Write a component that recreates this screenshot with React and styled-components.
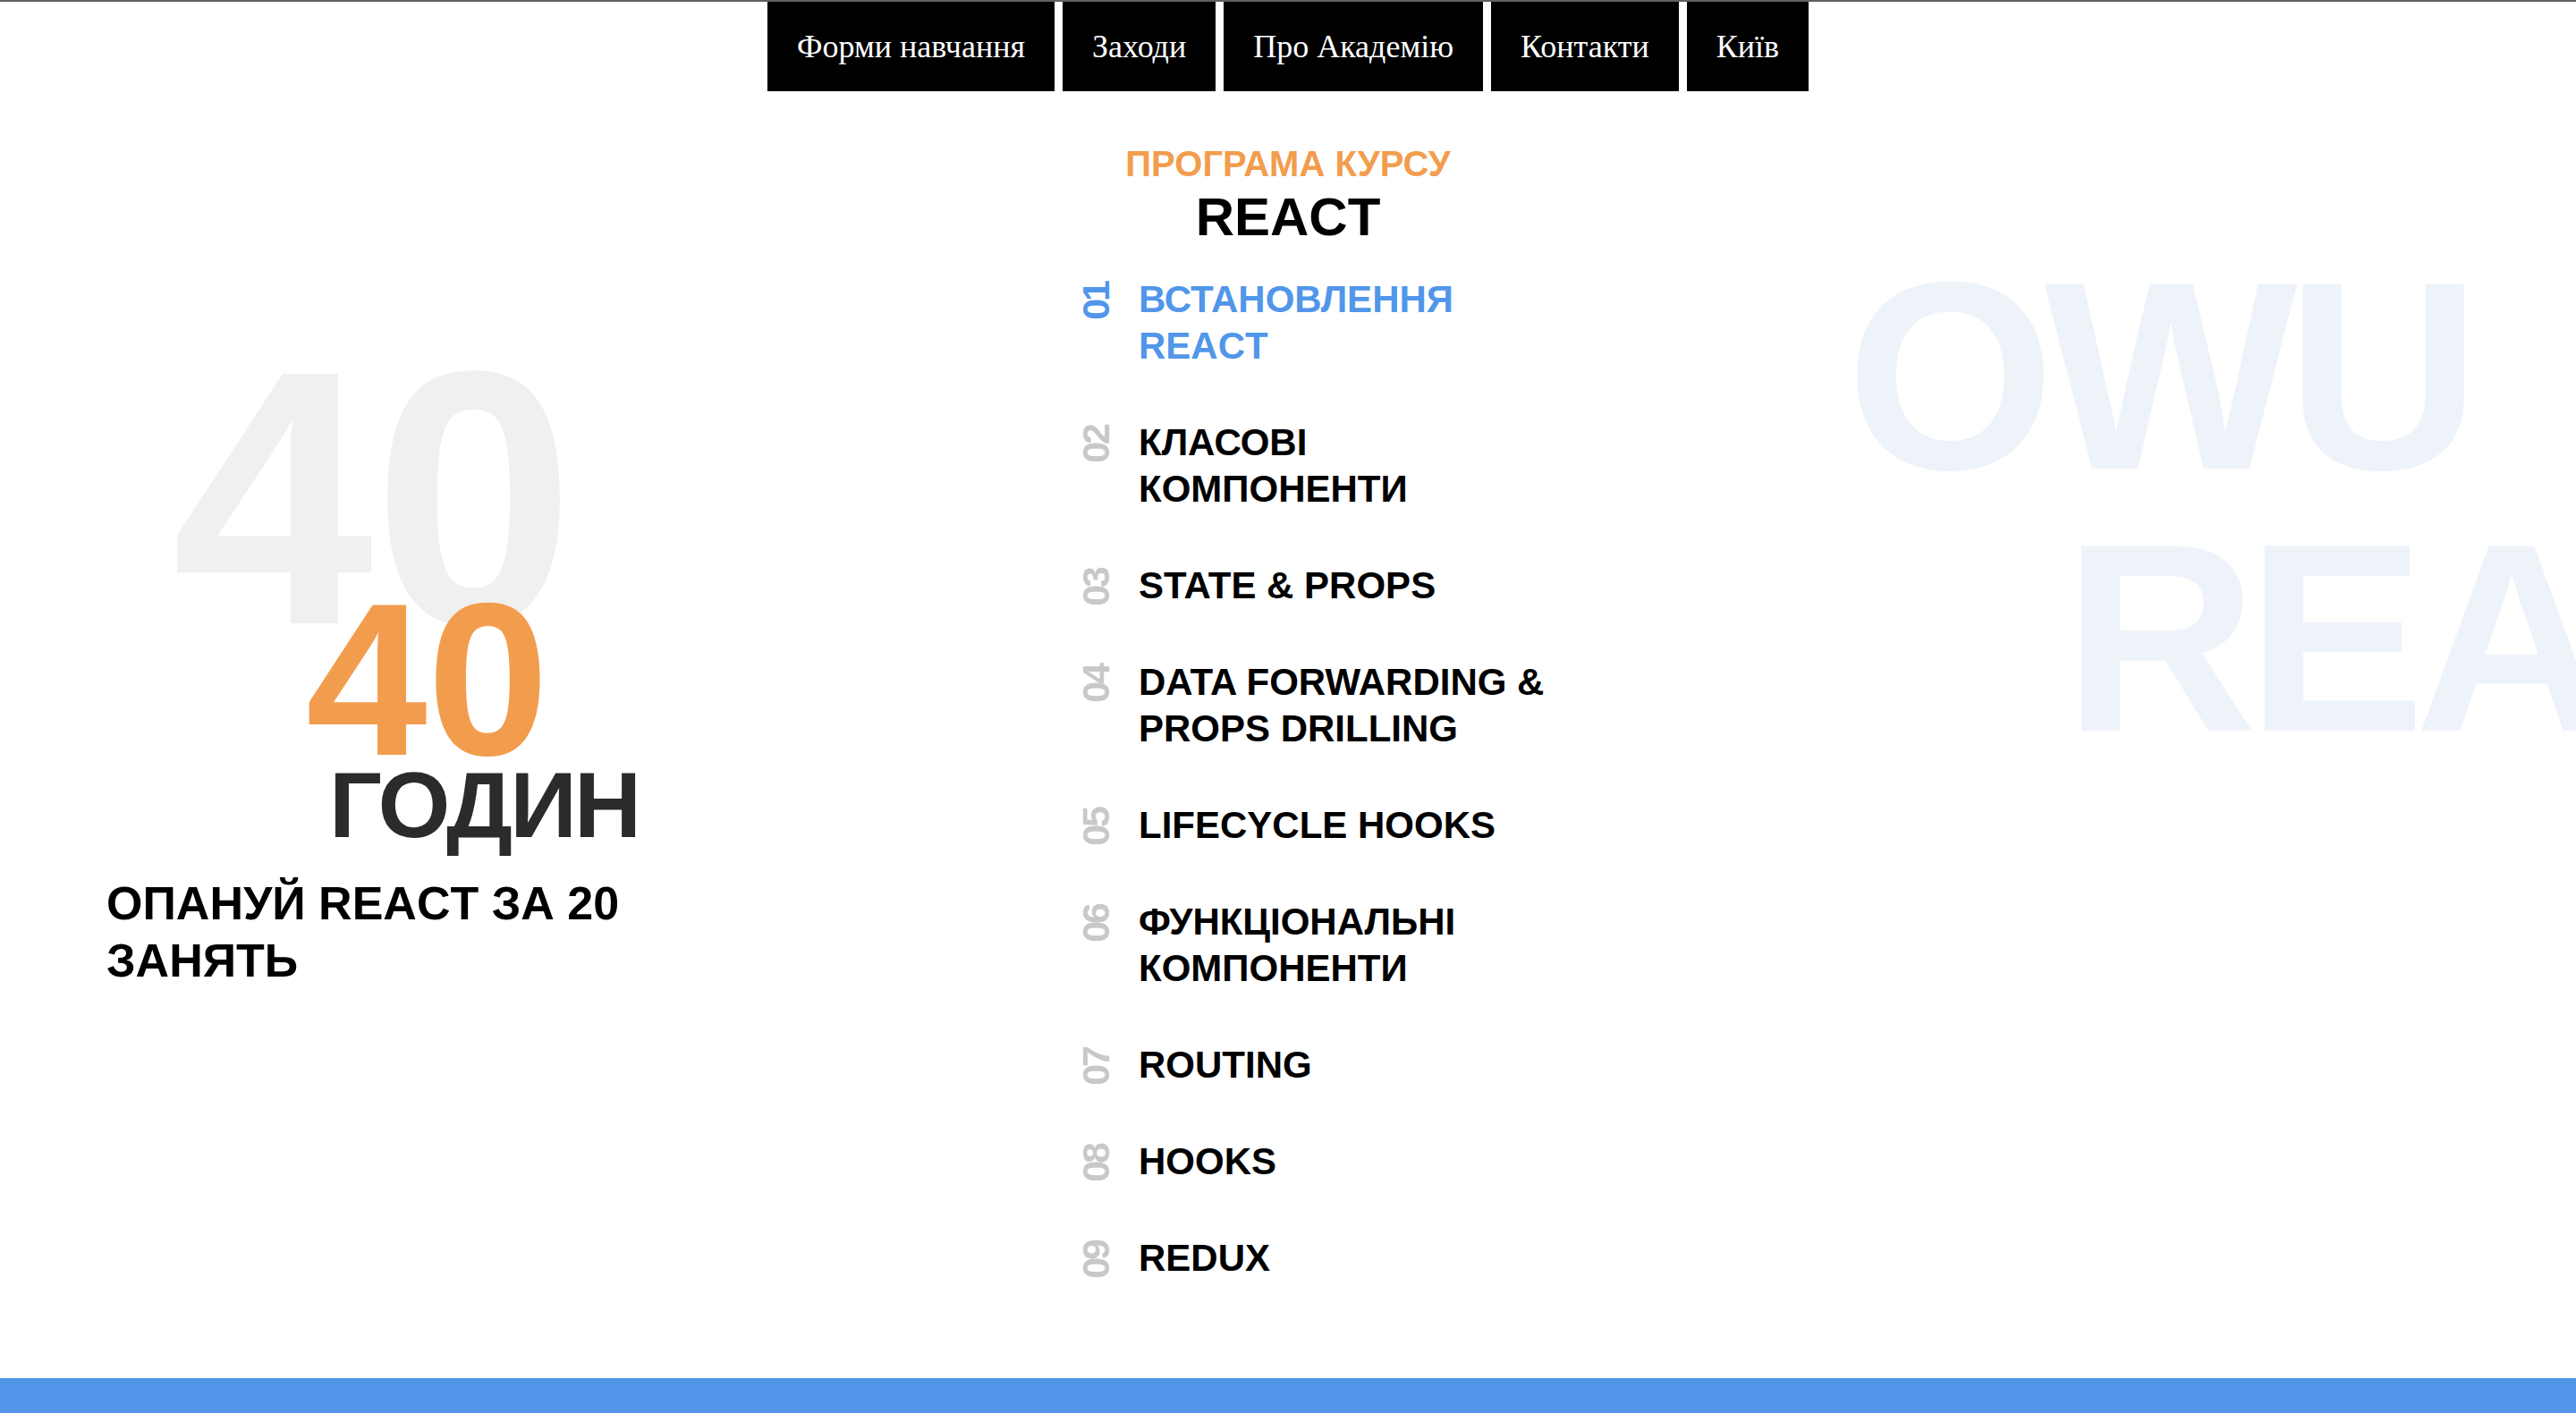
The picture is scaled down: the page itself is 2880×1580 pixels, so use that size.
import React from 'react';
import styled, { createGlobalStyle } from 'styled-components';

const GlobalStyle = createGlobalStyle`
  html, body {
    margin: 0;
    padding: 0;
    background: #fff;
  }
  body {
    font-family: "Liberation Sans", Arial, sans-serif;
    overflow: hidden;
  }
`;

const Page = styled.div`
  width: 100%;
  height: 1580px;
  overflow: hidden;
  display: flex;
  flex-direction: column;
  border-top: 2px solid #616161;
  box-sizing: border-box;
`;

const Nav = styled.nav`
  display: flex;
  justify-content: center;
  gap: 9px;
`;

const NavItem = styled.a`
  height: 100px;
  padding: 0 33px;
  display: flex;
  align-items: center;
  background: #000;
  color: #fff;
  font-family: "Liberation Serif", "Times New Roman", serif;
  font-size: 36px;
  text-decoration: none;
`;

const Main = styled.main`
  display: grid;
  grid-template-columns: 960px 960px 960px;
  height: 1439px;
`;

const LeftCol = styled.section`
  position: relative;
  padding: 563px 0 0 119px;
`;

const BgNumber = styled.div`
  position: absolute;
  left: 192px;
  top: 252px;
  font-size: 405px;
  line-height: 1;
  font-weight: 700;
  color: #f0f0f0;
  z-index: 0;
`;

const Hours = styled.div`
  position: relative;
  z-index: 1;
  margin-left: 223px;
  font-size: 244px;
  line-height: 190px;
  font-weight: 700;
  color: #f29d4e;
`;

const HoursLabel = styled.div`
  position: relative;
  z-index: 1;
  margin-left: 249px;
  font-size: 104px;
  line-height: 90px;
  letter-spacing: -3px;
  font-weight: 700;
  color: #2b2b2b;
`;

const Tagline = styled.p`
  margin: 33px 0 0;
  max-width: 660px;
  font-size: 52px;
  line-height: 64px;
  font-weight: 700;
  color: #000;
`;

const CenterCol = styled.section`
  padding-top: 57px;
  display: flex;
  flex-direction: column;
`;

const Eyebrow = styled.div`
  text-align: center;
  font-size: 40px;
  line-height: 48px;
  font-weight: 700;
  color: #f29d4e;
`;

const CourseTitle = styled.h1`
  margin: 0;
  text-align: center;
  font-size: 60px;
  line-height: 72px;
  font-weight: 700;
  color: #000;
`;

const Topics = styled.ol`
  list-style: none;
  margin: 30px 0 0;
  padding: 0 0 0 244px;
  display: flex;
  flex-direction: column;
  gap: 56px;
`;

const Topic = styled.li`
  display: grid;
  grid-template-columns: 42px 490px;
  column-gap: 27px;
  align-items: start;
`;

const TopicNo = styled.span`
  writing-mode: vertical-rl;
  transform: rotate(180deg);
  margin-top: 7px;
  font-size: 43px;
  line-height: 42px;
  letter-spacing: -3px;
  font-weight: 700;
  color: ${(p) => (p.$active ? '#5196e9' : '#c8c8c8')};
`;

const TopicName = styled.span`
  font-size: 42px;
  line-height: 52px;
  font-weight: 700;
  color: ${(p) => (p.$active ? '#5196e9' : '#000')};
`;

const RightCol = styled.section`
  padding: 172px 0 0 144px;
  white-space: nowrap;
`;

const Watermark = styled.div`
  font-size: 300px;
  line-height: 293px;
  letter-spacing: -12px;
  font-weight: 700;
  color: #eef3fa;
  margin-left: ${(p) => p.$indent || 0}px;
`;

const Footer = styled.footer`
  flex: 1;
  background: #5196e9;
`;

const navLinks = ['Форми навчання', 'Заходи', 'Про Академію', 'Контакти', 'Київ'];

const topics = [
  'ВСТАНОВЛЕННЯ REACT',
  'КЛАСОВІ КОМПОНЕНТИ',
  'STATE & PROPS',
  'DATA FORWARDING & PROPS DRILLING',
  'LIFECYCLE HOOKS',
  'ФУНКЦІОНАЛЬНІ КОМПОНЕНТИ',
  'ROUTING',
  'HOOKS',
  'REDUX',
];

export default function App() {
  return (
    <>
      <GlobalStyle />
      <Page>
        <Nav>
          {navLinks.map((link) => (
            <NavItem key={link} href="#">
              {link}
            </NavItem>
          ))}
        </Nav>

        <Main>
          <LeftCol>
            <BgNumber>40</BgNumber>
            <Hours>40</Hours>
            <HoursLabel>ГОДИН</HoursLabel>
            <Tagline>ОПАНУЙ REACT ЗА 20 ЗАНЯТЬ</Tagline>
          </LeftCol>

          <CenterCol>
            <Eyebrow>ПРОГРАМА КУРСУ</Eyebrow>
            <CourseTitle>REACT</CourseTitle>
            <Topics>
              {topics.map((name, i) => (
                <Topic key={name}>
                  <TopicNo $active={i === 0}>{String(i + 1).padStart(2, '0')}</TopicNo>
                  <TopicName $active={i === 0}>{name}</TopicName>
                </Topic>
              ))}
            </Topics>
          </CenterCol>

          <RightCol>
            <Watermark>OWU</Watermark>
            <Watermark $indent={243}>REACT</Watermark>
          </RightCol>
        </Main>

        <Footer />
      </Page>
    </>
  );
}
